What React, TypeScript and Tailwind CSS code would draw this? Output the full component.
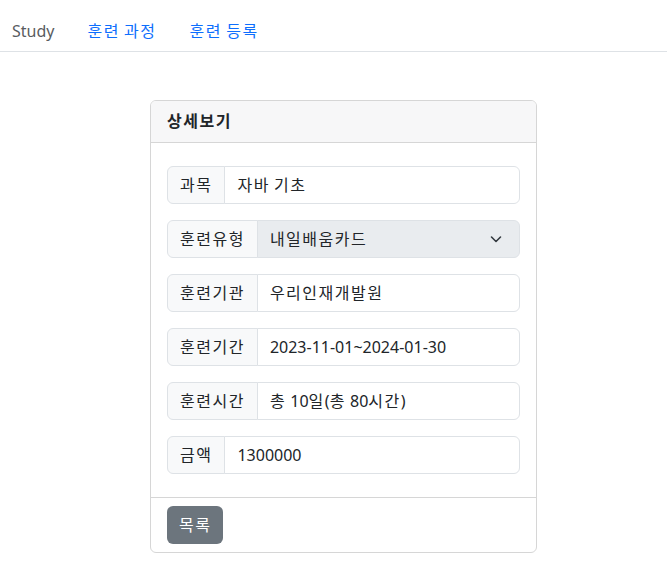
import React from "react";

const FONT = { fontFamily: '"Noto Sans", "Noto Sans CJK KR", sans-serif' };

// Hangul runs get a little letter-spacing so they take the width of the original font
function K({ text }: { text: string }) {
  const parts = text.split(/([\uAC00-\uD7A3]+)/);
  return (
    <>
      {parts.map((p, i) =>
        /[\uAC00-\uD7A3]/.test(p) ? (
          <span key={i} className="tracking-[1.5px]">
            {p}
          </span>
        ) : (
          <React.Fragment key={i}>{p}</React.Fragment>
        ),
      )}
    </>
  );
}

function Field({ label, value, select }: { label: string; value: string; select?: boolean }) {
  return (
    <div className="flex h-[38px] mb-4 last:mb-0">
      <div className="flex items-center px-3 bg-[#f8f9fa] border border-[#dee2e6] rounded-l-[6px] text-[16px] leading-6 text-[#212529] whitespace-nowrap">
        <K text={label} />
      </div>
      <div
        className={`flex-1 flex items-center justify-between pl-3 pr-[15px] -ml-px border border-[#dee2e6] rounded-r-[6px] text-[16px] leading-6 text-[#212529] ${
          select ? "bg-[#e9ecef]" : "bg-white"
        }`}
      >
        <span>
          <K text={value} />
        </span>
        {select && (
          <svg width="16" height="16" viewBox="0 0 16 16">
            <path d="m3.5 6 4.5 4.5 4.5-4.5" fill="none" stroke="#343a40" strokeWidth="1.6" strokeLinecap="round" strokeLinejoin="round" />
          </svg>
        )}
      </div>
    </div>
  );
}

export default function App() {
  return (
    <div className="min-h-[564px] bg-white" style={FONT}>
      <nav className="flex items-start h-[52px] border-b border-[#dee2e6] px-3 pt-[19px] text-[16px] leading-6">
        <span className="text-[#595c5f] mr-[33px]">Study</span>
        <a className="text-[#0d6efd] mr-[33px]">
          <K text="훈련 과정" />
        </a>
        <a className="text-[#0d6efd]">
          <K text="훈련 등록" />
        </a>
      </nav>
      <div className="ml-[150px] mt-[48px] w-[387px] border border-[#d6d6d6] rounded-[6px] overflow-hidden">
        <div className="px-4 py-[8px] h-[42px] bg-[#f7f7f8] border-b border-[#d6d6d6] text-[16px] leading-6 font-bold text-[#212529]">
          <K text="상세보기" />
        </div>
        <div className="px-4 pt-[23px] pb-[23px]">
          <Field label="과목" value="자바 기초" />
          <Field label="훈련유형" value="내일배움카드" select />
          <Field label="훈련기관" value="우리인재개발원" />
          <Field label="훈련기간" value="2023-11-01~2024-01-30" />
          <Field label="훈련시간" value="총 10일(총 80시간)" />
          <Field label="금액" value="1300000" />
        </div>
        <div className="px-4 py-2 border-t border-[#d6d6d6]">
          <button className="h-[38px] px-3 bg-[#6c757d] text-white rounded-[6px] text-[16px] leading-6">
            <K text="목록" />
          </button>
        </div>
      </div>
    </div>
  );
}
